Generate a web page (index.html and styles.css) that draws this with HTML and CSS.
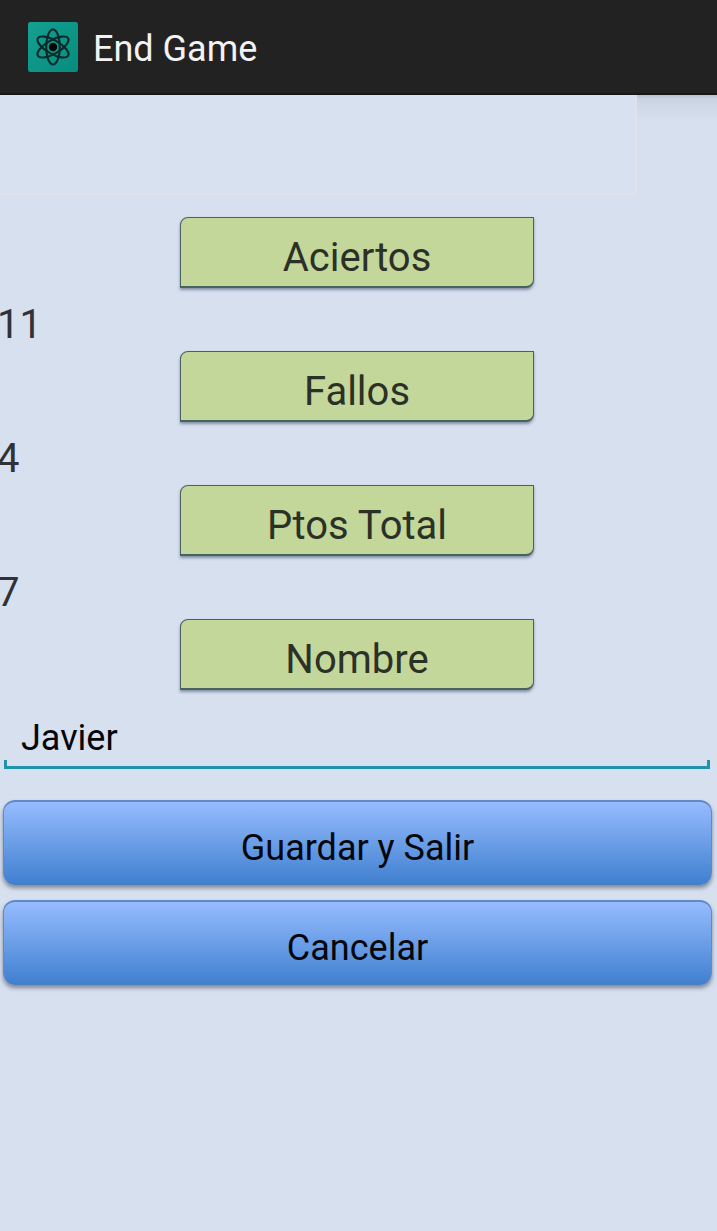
FILE: index.html
```html
<!DOCTYPE html>
<html lang="es">
<head>
    <meta charset="UTF-8">
    <meta name="viewport" content="width=device-width, initial-scale=1.0">
    <title>End Game</title>
    <link rel="stylesheet" href="styles.css">
</head>
<body>
    <header class="action-bar">
        <svg class="app-icon" viewBox="0 0 50 50">
            <defs>
                <linearGradient id="icon-bg" x1="0" y1="0" x2="1" y2="1">
                    <stop offset="0" stop-color="#14a091"/>
                    <stop offset="1" stop-color="#078c7f"/>
                </linearGradient>
            </defs>
            <rect width="50" height="50" rx="2.5" fill="url(#icon-bg)"/>
            <g fill="none" stroke="#0b2928" stroke-width="2.1">
                <ellipse cx="25" cy="25" rx="6.8" ry="17.5"/>
                <ellipse cx="25" cy="25" rx="6.8" ry="17.5" transform="rotate(60 25 25)"/>
                <ellipse cx="25" cy="25" rx="6.8" ry="17.5" transform="rotate(-60 25 25)"/>
            </g>
            <circle cx="25" cy="25" r="4.2" fill="#020808"/>
        </svg>
        <h1 class="title">End Game</h1>
    </header>

    <main>
        <div class="banner">
            <div class="banner-box"></div>
        </div>

        <div class="results">
            <div class="label">Aciertos</div>
            <div class="value">11</div>
            <div class="label">Fallos</div>
            <div class="value">4</div>
            <div class="label">Ptos Total</div>
            <div class="value">7</div>
            <div class="label">Nombre</div>
        </div>

        <div class="name-field">
            <input type="text" id="name-input" value="Javier">
        </div>

        <div class="buttons">
            <button>Guardar y Salir</button>
            <button>Cancelar</button>
        </div>
    </main>
</body>
</html>
```
FILE: styles.css
```css
:root {
    --background: #d7e0ef;
    --accent: #1f93ad;
    --label: #c4d79b;
    --label-border: #46635f;
}

* {
    margin: 0;
    padding: 0;
    box-sizing: border-box;
    font-family: Roboto, sans-serif;
}

body {
    background: var(--background);
    min-height: 100vh;
    overflow: hidden;
}

.action-bar {
    display: flex;
    align-items: center;
    height: 95px;
    padding: 1px 28px 0;
    background: #222;
    border-bottom: 2px solid #17171a;
}

.app-icon {
    width: 50px;
    height: 50px;
    margin-right: 15px;
}

.title {
    color: #f3f3f3;
    font-size: 36px;
    font-weight: 400;
    line-height: 42px;
    padding-top: 4px;
}

.banner {
    height: 122px;
    background: linear-gradient(#b8bfd0 0, #cbd4e3 4px, var(--background) 26px);
}

.banner-box {
    width: 637px;
    height: 100px;
    background: #d7e1ef;
    border-right: 2px solid #e0e1ea;
    border-bottom: 2px solid #e0e1ea;
}

.results {
    display: flex;
    flex-direction: column;
}

.label {
    align-self: center;
    width: 354px;
    height: 71px;
    margin-right: 3px;
    padding-top: 5px;
    background: var(--label);
    border: 1px solid var(--label-border);
    border-bottom-width: 2px;
    border-radius: 8px 0;
    box-shadow: 0 2px 3px rgba(60, 75, 100, 0.55);
    color: #2c3127;
    font-size: 40px;
    line-height: 70px;
    text-align: center;
}

.value {
    height: 63px;
    padding-top: 5px;
    margin-left: -3px;
    color: #303236;
    font-size: 40px;
    line-height: 63px;
}

.name-field {
    height: 79px;
    margin: 0 7px 0 4px;
    /* side ticks at both ends of the underline */
    background:
        linear-gradient(var(--accent), var(--accent)) left bottom / 3px 6px no-repeat,
        linear-gradient(var(--accent), var(--accent)) right bottom / 3px 6px no-repeat;
    border-bottom: 3px solid var(--accent);
}

.name-field input {
    width: 100%;
    height: 76px;
    padding: 19px 17px 0;
    background: none;
    border: none;
    outline: none;
    color: #050608;
    font-size: 36px;
}

.buttons {
    display: flex;
    flex-direction: column;
    gap: 15px;
    padding: 31px 5px 0 3px;
}

button {
    height: 85px;
    padding-top: 9px;
    background: linear-gradient(#96bcff, #4080cf);
    border: 1px solid #6189c2;
    border-top-width: 2px;
    border-bottom-color: #4b7fbd;
    border-radius: 12px;
    box-shadow: 0 3px 4px rgba(70, 75, 90, 0.6);
    color: #05070c;
    font-size: 36px;
}
```
